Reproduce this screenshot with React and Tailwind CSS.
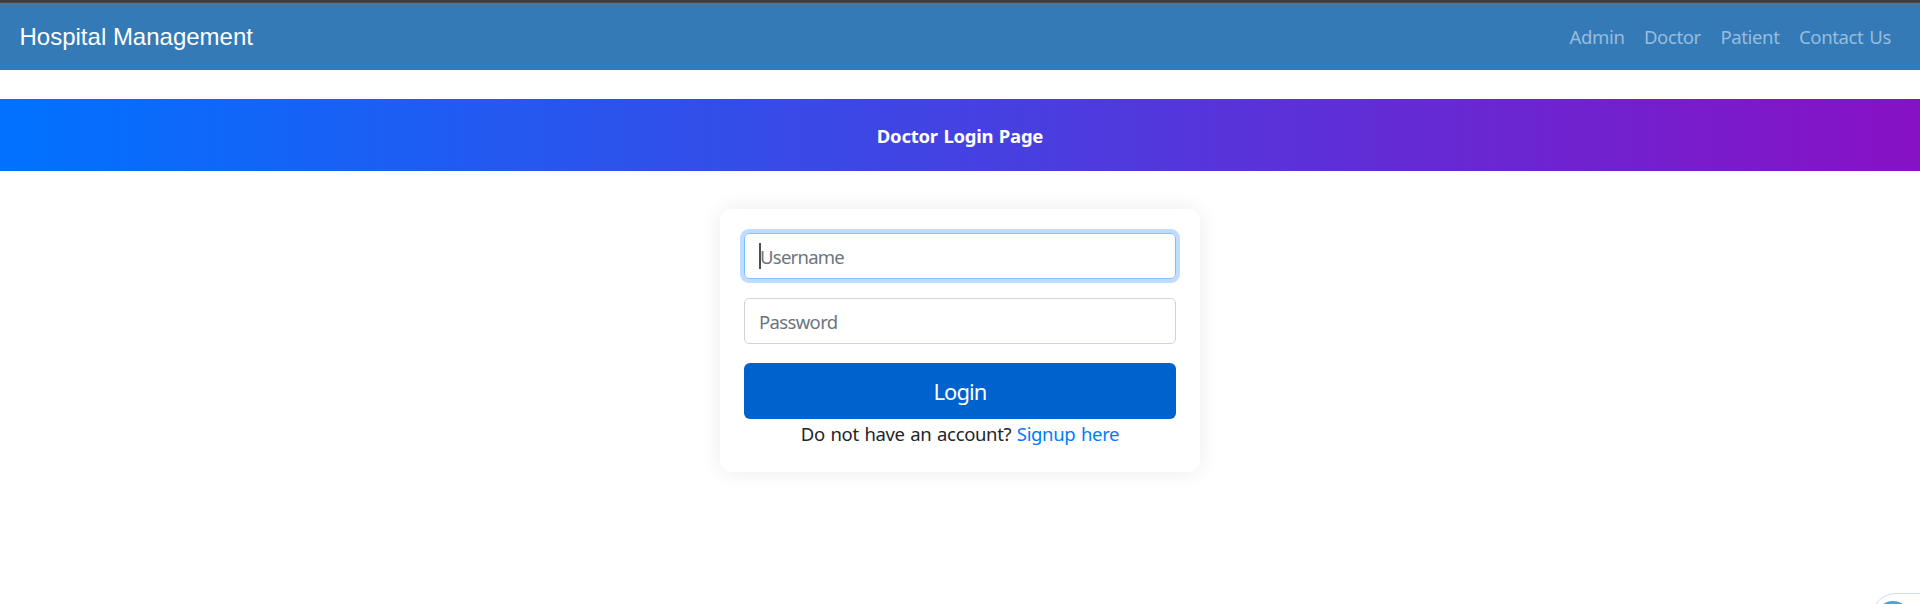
const links = ['Admin', 'Doctor', 'Patient', 'Contact Us'];

export default function App() {
  return (
    <div className="relative flex h-[604px] w-full flex-col overflow-hidden bg-white font-['Noto_Sans',sans-serif] text-[18.5px] leading-[29px] tracking-[-0.55px] text-[#212529]">
      <div className="h-[3px] shrink-0 border-b border-[#4b4a46] bg-[#3e3e3e]" />
      <nav className="flex h-[67px] shrink-0 items-center justify-between bg-[#337ab7] pr-[28px] pl-[19.5px]">
        <a className="font-['Liberation_Sans',sans-serif] text-[24px] tracking-normal text-white">Hospital Management</a>
        <ul className="flex gap-[19.5px] pr-px pb-px tracking-[-0.36px] [word-spacing:1.5px] text-white/50">
          {links.map((link) => (
            <li key={link}>{link}</li>
          ))}
        </ul>
      </nav>
      <header className="mt-[29px] flex h-[72px] shrink-0 items-center justify-center bg-linear-to-r/srgb from-[#0072ff] to-[#8811c5] font-bold tracking-[-0.25px] text-white [word-spacing:1px]">
        <h1>Doctor Login Page</h1>
      </header>
      <main className="mt-[38px] flex justify-center">
        <form className="flex h-[263px] w-[480px] flex-col rounded-[12px] bg-white px-[24px] pt-[24px] shadow-[0_0_22px_rgba(0,0,0,0.08)]">
          <div className="flex h-[46px] shrink-0 items-center rounded-[5px] border border-[#80bdff] pt-px pl-[14px] tracking-[-0.75px] text-[#6c757d] shadow-[0_0_0_4px_#bfdeff]">
            <span className="-mt-px -mr-[2px] h-[26px] w-[2px] bg-[#495057]" />
            <span className="pl-[1px]">Username</span>
          </div>
          <div className="mt-[19px] flex h-[46px] shrink-0 items-center rounded-[5px] border border-[#ced4da] pl-[14px] tracking-[-0.65px] text-[#6c757d]">
            Password
          </div>
          <button type="button" className="mt-[19px] flex h-[56px] shrink-0 items-center justify-center rounded-[6px] bg-[#0062cc] text-[22px] tracking-[-0.9px] text-white">
            Login
          </button>
          <p className="text-center tracking-[-0.35px] [word-spacing:1.2px]">
            Do not have an account? <a className="text-[#007bff]">Signup here</a>
          </p>
        </form>
      </main>
      <div className="absolute top-[593px] left-[1871px] h-[50px] w-[100px] rounded-l-full border border-[#c9dafb] bg-white pt-[7px] pl-[4px]">
        <div className="h-[34px] w-[34px] rounded-full bg-[#42a5dc]" />
      </div>
    </div>
  );
}
